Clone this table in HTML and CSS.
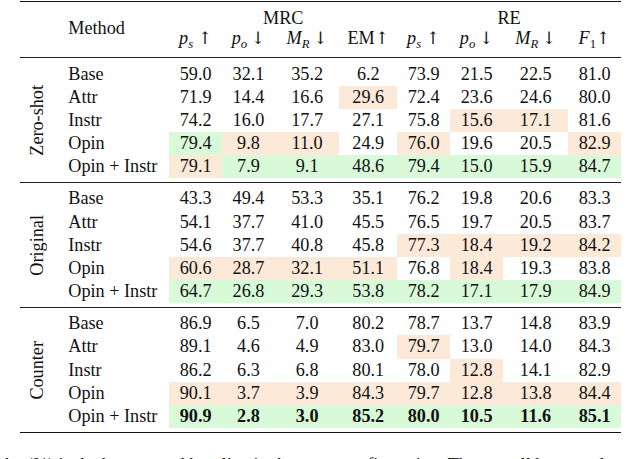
FILE: index.html
```html
<!DOCTYPE html>
<html lang="en">
<head>
<meta charset="utf-8">
<title>Results table</title>
<link rel="stylesheet" href="styles.css">
</head>
<body>
<div class="table">
  <div class="grid head">
    <div class="corner"></div>
    <div class="method-h">Method</div>
    <div class="span4">MRC</div>
    <div class="span4 re">RE</div>
    <div class="h2"><i>p</i><sub><i>s</i></sub> <span class="arr">↑</span></div>
    <div class="h2"><i>p</i><sub><i>o</i></sub>&#8201;<span class="arr">↓</span></div>
    <div class="h2"><i>M</i><sub><i>R</i></sub>&#8201;<span class="arr">↓</span></div>
    <div class="h2">EM<span class="arr">↑</span></div>
    <div class="h2"><i>p</i><sub><i>s</i></sub> <span class="arr">↑</span></div>
    <div class="h2"><i>p</i><sub><i>o</i></sub>&#8201;<span class="arr">↓</span></div>
    <div class="h2"><i>M</i><sub><i>R</i></sub>&#8201;<span class="arr">↓</span></div>
    <div class="h2"><i>F</i><sub>1</sub><span class="arr">↑</span></div>
  </div>

  <div class="grid group">
    <div class="label"><span>Zero-shot</span></div>
    <div class="m">Base</div><div class="n">59.0</div><div class="n">32.1</div><div class="n">35.2</div><div class="n">6.2</div><div class="n">73.9</div><div class="n">21.5</div><div class="n">22.5</div><div class="n">81.0</div>
    <div class="m">Attr</div><div class="n">71.9</div><div class="n">14.4</div><div class="n">16.6</div><div class="n o">29.6</div><div class="n">72.4</div><div class="n">23.6</div><div class="n">24.6</div><div class="n">80.0</div>
    <div class="m">Instr</div><div class="n">74.2</div><div class="n">16.0</div><div class="n">17.7</div><div class="n">27.1</div><div class="n">75.8</div><div class="n o">15.6</div><div class="n o">17.1</div><div class="n">81.6</div>
    <div class="m">Opin</div><div class="n g">79.4</div><div class="n o">9.8</div><div class="n o">11.0</div><div class="n">24.9</div><div class="n o">76.0</div><div class="n">19.6</div><div class="n">20.5</div><div class="n o">82.9</div>
    <div class="m">Opin + Instr</div><div class="n o">79.1</div><div class="n g">7.9</div><div class="n g">9.1</div><div class="n g">48.6</div><div class="n g">79.4</div><div class="n g">15.0</div><div class="n g">15.9</div><div class="n g">84.7</div>
  </div>

  <div class="grid group">
    <div class="label"><span>Original</span></div>
    <div class="m">Base</div><div class="n">43.3</div><div class="n">49.4</div><div class="n">53.3</div><div class="n">35.1</div><div class="n">76.2</div><div class="n">19.8</div><div class="n">20.6</div><div class="n">83.3</div>
    <div class="m">Attr</div><div class="n">54.1</div><div class="n">37.7</div><div class="n">41.0</div><div class="n">45.5</div><div class="n">76.5</div><div class="n">19.7</div><div class="n">20.5</div><div class="n">83.7</div>
    <div class="m">Instr</div><div class="n">54.6</div><div class="n">37.7</div><div class="n">40.8</div><div class="n">45.8</div><div class="n o">77.3</div><div class="n o">18.4</div><div class="n o">19.2</div><div class="n o">84.2</div>
    <div class="m">Opin</div><div class="n o">60.6</div><div class="n o">28.7</div><div class="n o">32.1</div><div class="n o">51.1</div><div class="n">76.8</div><div class="n o">18.4</div><div class="n">19.3</div><div class="n">83.8</div>
    <div class="m">Opin + Instr</div><div class="n g">64.7</div><div class="n g">26.8</div><div class="n g">29.3</div><div class="n g">53.8</div><div class="n g">78.2</div><div class="n g">17.1</div><div class="n g">17.9</div><div class="n g">84.9</div>
  </div>

  <div class="grid group last">
    <div class="label"><span>Counter</span></div>
    <div class="m">Base</div><div class="n">86.9</div><div class="n">6.5</div><div class="n">7.0</div><div class="n">80.2</div><div class="n">78.7</div><div class="n">13.7</div><div class="n">14.8</div><div class="n">83.9</div>
    <div class="m">Attr</div><div class="n">89.1</div><div class="n">4.6</div><div class="n">4.9</div><div class="n">83.0</div><div class="n o">79.7</div><div class="n">13.0</div><div class="n">14.0</div><div class="n">84.3</div>
    <div class="m">Instr</div><div class="n">86.2</div><div class="n">6.3</div><div class="n">6.8</div><div class="n">80.1</div><div class="n">78.0</div><div class="n o">12.8</div><div class="n">14.1</div><div class="n">82.9</div>
    <div class="m">Opin</div><div class="n o">90.1</div><div class="n o">3.7</div><div class="n o">3.9</div><div class="n o">84.3</div><div class="n o">79.7</div><div class="n o">12.8</div><div class="n o">13.8</div><div class="n o">84.4</div>
    <div class="m">Opin + Instr</div><div class="n g b">90.9</div><div class="n g b">2.8</div><div class="n g b">3.0</div><div class="n g b">85.2</div><div class="n g b">80.0</div><div class="n g b">10.5</div><div class="n g b">11.6</div><div class="n g b">85.1</div>
  </div>
</div>
<p class="caption">the (%) is the best-scored baseline in the same configuration. The overall best results are highlighted in bold.</p>
</body>
</html>
```

FILE: styles.css
```css
html, body {
  margin: 0;
  padding: 0;
  background: #fff;
  overflow: hidden;
}
body {
  font-family: "Liberation Serif", "Times New Roman", serif;
  font-size: 18.2px;
  color: #111;
  width: 640px;
  height: 459px;
}
.table {
  margin: 1px 0 0 20px;
  width: 601px;
  border-top: 1.5px solid #111;
  border-bottom: 1.5px solid #111;
}
.grid {
  display: grid;
  grid-template-columns: 34px 115.3px 52.7px 53px 64.3px 58px 52.7px 53.3px 65px 52.7px;
}
.head {
  grid-template-rows: 20px 20px;
  padding: 6.4px 0 8.8px;
  line-height: 20px;
  border-bottom: 1px solid #222;
  text-align: center;
}
.corner {
  grid-column: 1;
  grid-row: 1 / span 2;
}
.method-h {
  grid-column: 2;
  grid-row: 1 / span 2;
  align-self: center;
  text-align: left;
  padding-left: 14.3px;
}
.span4 {
  grid-row: 1;
  grid-column: 3 / span 4;
}
.span4.re {
  grid-column: 7 / span 4;
}
.h2 {
  grid-row: 2;
  white-space: nowrap;
}
.arr {
  font-family: "DejaVu Serif", "Liberation Serif", serif;
  font-size: 0.95em;
  font-weight: 200;
}
sub {
  font-size: 0.7em;
  vertical-align: -0.28em;
  line-height: 0;
}
.group {
  grid-template-rows: repeat(5, 23.15px);
  padding: 4.55px 0 3.5px;
  line-height: 23.15px;
  border-bottom: 1px solid #222;
}
.group.last {
  padding-bottom: 4.5px;
  border-bottom: none;
}
.label {
  grid-column: 1;
  grid-row: 1 / span 5;
  display: flex;
  align-items: center;
  justify-content: center;
}
.label span {
  writing-mode: vertical-rl;
  transform: rotate(180deg);
  white-space: nowrap;
  line-height: 20px;
}
.m {
  grid-column: 2;
  padding-left: 14.3px;
  white-space: nowrap;
}
.n {
  text-align: center;
}
.o {
  background: #fde9d8;
}
.g {
  background: #d8fad8;
}
.b {
  font-weight: bold;
}
.caption {
  margin: 20.7px 0 0;
  width: 640px;
  overflow: hidden;
  line-height: 23.15px;
  white-space: nowrap;
}
```
